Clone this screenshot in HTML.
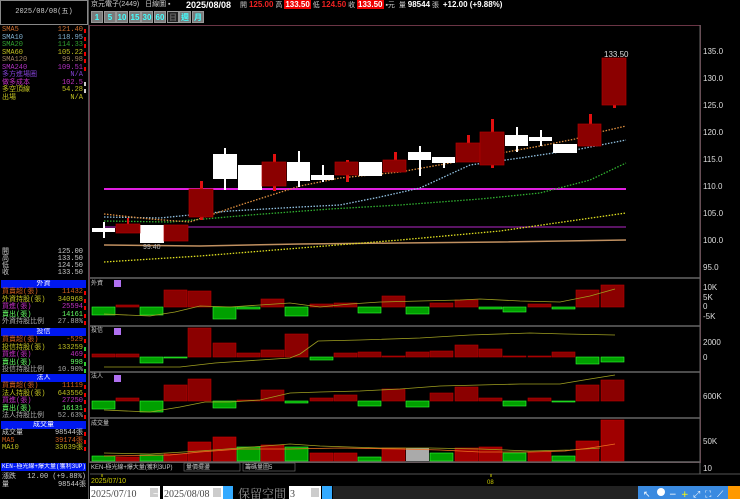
<!DOCTYPE html>
<html><head><meta charset="utf-8"><style>
*{margin:0;padding:0;box-sizing:border-box}
body{width:740px;height:499px;background:#000;overflow:hidden;position:relative;font-family:"Liberation Sans","Noto Sans CJK TC",sans-serif;color:#ccc}
.a{position:absolute;white-space:nowrap}
.t{font-size:7px;line-height:7.3px;font-family:"Liberation Mono","Noto Sans CJK TC",monospace;white-space:nowrap}
.r{position:absolute;left:2px;width:84px;height:7.3px}
.r span{position:absolute;right:3px}
.r i{position:absolute;right:0;top:2px;width:2px;height:4px;background:#e00}
.hd{position:absolute;left:1px;width:85px;height:8px;background:#0018f0;color:#fff;font-size:7px;line-height:8px;text-align:center;font-family:"Liberation Mono","Noto Sans CJK TC",monospace;white-space:nowrap;overflow:hidden}
.btn{position:absolute;top:11px;height:12px;width:12px;background:#7a7a7a;color:#4ff;font-size:8px;line-height:12px;text-align:center;font-weight:bold;border:1px solid #999}
.ax{position:absolute;left:703px;font-size:8px;color:#ddd}
</style></head><body>
<div class="a" style="left:0;top:0;width:88px;height:25px;border:1px solid #888;color:#ccc;font-size:7px;text-align:center;line-height:23px;font-family:'Liberation Mono','Noto Sans CJK TC',monospace">2025/08/08(五)</div>
<div class="a" style="left:88px;top:0;width:1px;height:499px;background:#555"></div>
<div class="t">
<div class="r" style="top:27px;color:#d07030">SMA5<span>121.40</span><i></i></div>
<div class="r" style="top:34.5px;color:#80b0d0">SMA10<span>118.95</span><i></i></div>
<div class="r" style="top:42px;color:#30a030">SMA20<span>114.33</span><i></i></div>
<div class="r" style="top:49.5px;color:#c0c020">SMA60<span>105.22</span><i></i></div>
<div class="r" style="top:57px;color:#a08060">SMA120<span>99.98</span><i></i></div>
<div class="r" style="top:64.5px;color:#b030c0">SMA240<span>109.51</span><i></i></div>
<div class="r" style="top:72px;color:#8040d0">多方進場圈<span>N/A</span></div>
<div class="r" style="top:79.5px;color:#c030c0">做多成本<span>102.5</span><i style="background:#ccc"></i></div>
<div class="r" style="top:87px;color:#c0c020">多空頂線<span>54.28</span><i style="background:#ccc"></i></div>
<div class="r" style="top:94.5px;color:#c0c020">出場<span>N/A</span></div>
<div class="r" style="top:249px">開<span>125.00</span></div>
<div class="r" style="top:256px">高<span>133.50</span></div>
<div class="r" style="top:263px">低<span>124.50</span></div>
<div class="r" style="top:270px">收<span>133.50</span></div>
</div>
<div class="hd" style="top:280px">外資</div>
<div class="t">
<div class="r" style="top:289px;color:#d06020">買賣超(張)<span>11432</span><i></i></div>
<div class="r" style="top:296.5px;color:#c0c020">外資持股(張)<span>340968</span><i></i></div>
<div class="r" style="top:304px;color:#c030c0">買進(張)<span>25594</span><i></i></div>
<div class="r" style="top:311.5px;color:#6f6">賣出(張)<span>14161</span><i></i></div>
<div class="r" style="top:319px;color:#aaa">外資持股比例<span>27.88%</span><i></i></div>
</div>
<div class="hd" style="top:328px">投信</div>
<div class="t">
<div class="r" style="top:337px;color:#d06020">買賣超(張)<span>-529</span><i></i></div>
<div class="r" style="top:344.5px;color:#c0c020">投信持股(張)<span>133259</span><i style="background:#3c3"></i></div>
<div class="r" style="top:352px;color:#c030c0">買進(張)<span>469</span><i></i></div>
<div class="r" style="top:359.5px;color:#6f6">賣出(張)<span>998</span><i style="background:#3c3"></i></div>
<div class="r" style="top:367px;color:#aaa">投信持股比例<span>10.90%</span><i style="background:#3c3"></i></div>
</div>
<div class="hd" style="top:374px">法人</div>
<div class="t">
<div class="r" style="top:383px;color:#d06020">買賣超(張)<span>11119</span><i></i></div>
<div class="r" style="top:390.5px;color:#c0c020">法人持股(張)<span>643556</span><i></i></div>
<div class="r" style="top:398px;color:#c030c0">買進(張)<span>27250</span><i></i></div>
<div class="r" style="top:405.5px;color:#6f6">賣出(張)<span>16131</span><i></i></div>
<div class="r" style="top:413px;color:#aaa">法人持股比例<span>52.63%</span><i></i></div>
</div>
<div class="hd" style="top:421px">成交量</div>
<div class="t">
<div class="r" style="top:430px;color:#ccc">成交量<span>98544張</span><i></i></div>
<div class="r" style="top:437.5px;color:#d06020">MA5<span>39174張</span><i></i></div>
<div class="r" style="top:445px;color:#c0c020">MA10<span>33639張</span><i></i></div>
</div>
<div class="hd" style="top:463px;text-align:left;padding-left:1px;font-size:6px">KEN-極光線+爆大量(獲利3UP)</div>
<div class="t">
<div class="r" style="top:474px">漲跌<span style="right:0">12.00 (+9.88%)</span></div>
<div class="r" style="top:481.5px">量<span style="right:0">98544張</span></div>
</div>
<div class="a" style="left:91px;top:0;font-size:7px;line-height:10px;color:#ccc">京元電子(2449) &nbsp; 日線圖 ▪</div>
<div class="a" style="left:186px;top:0;font-size:9px;line-height:10px;color:#fff;font-weight:bold">2025/08/08</div>
<div class="a" style="left:240px;top:0;font-size:7px;line-height:10px;color:#ccc">開 <b style="color:#e22;font-size:8px">125.00</b> 高 <b style="color:#fff;background:#e00;font-size:8px;padding:0 1px">133.50</b> 低 <b style="color:#e22;font-size:8px">124.50</b> 收 <b style="color:#fff;background:#e00;font-size:8px;padding:0 1px">133.50</b> ▪元 &nbsp;量 <b style="color:#fff;font-size:8px">98544</b> 張 &nbsp;<b style="color:#fff;font-size:8px">+12.00 (+9.88%)</b></div>
<div class="btn" style="left:91px">1</div><div class="btn" style="left:104px">5</div>
<div class="btn" style="left:116px">10</div><div class="btn" style="left:129px">15</div>
<div class="btn" style="left:141px">30</div><div class="btn" style="left:154px">60</div>
<div class="btn" style="left:167px;background:#222;color:#666">日</div>
<div class="btn" style="left:179px">週</div><div class="btn" style="left:192px">月</div>
<div class="ax" style="top:47px">135.0</div><div class="ax" style="top:74px">130.0</div>
<div class="ax" style="top:101px">125.0</div><div class="ax" style="top:128px">120.0</div>
<div class="ax" style="top:155px">115.0</div><div class="ax" style="top:182px">110.0</div>
<div class="ax" style="top:209px">105.0</div><div class="ax" style="top:236px">100.0</div>
<div class="ax" style="top:263px">95.0</div>
<div class="ax" style="top:283px">10K</div><div class="ax" style="top:293px">5K</div>
<div class="ax" style="top:302px">0</div><div class="ax" style="top:312px">-5K</div>
<div class="ax" style="top:338px">2000</div><div class="ax" style="top:353px">0</div>
<div class="ax" style="top:392px">600K</div><div class="ax" style="top:437px">50K</div>
<div class="ax" style="top:464px">10</div>
<svg class="a" style="left:0;top:0" width="740" height="499">
<g fill="none">
<rect x="89.5" y="25.5" width="611" height="437" stroke="#6a3545"/>
<line x1="90" y1="278" x2="700" y2="278" stroke="#666" stroke-width="1.5"/>
<line x1="90" y1="326" x2="700" y2="326" stroke="#666" stroke-width="1.5"/>
<line x1="90" y1="372" x2="700" y2="372" stroke="#666" stroke-width="1.5"/>
<line x1="90" y1="418" x2="700" y2="418" stroke="#666" stroke-width="1.5"/>
<line x1="90" y1="462" x2="700" y2="462" stroke="#666" stroke-width="1.5"/>
<line x1="90" y1="474" x2="740" y2="474" stroke="#555"/>
<line x1="700" y1="25" x2="700" y2="474" stroke="#666"/>
<line x1="104" y1="189" x2="626" y2="189" stroke="#e020e0" stroke-width="2"/>
<line x1="104" y1="227" x2="626" y2="227" stroke="#9020a0" stroke-width="1.2"/>
<polyline points="104,245 200,246 300,244 400,243 500,242 626,240" stroke="#c09060" stroke-width="1.5"/>
<polyline points="104,262 200,256 300,248 400,240 500,231 626,213" stroke="#e0e020" stroke-dasharray="1.5,1.5" stroke-width="1.3"/>
<polyline points="104,221 170,222 250,215 330,209 400,205 480,199 540,193 590,180 626,163" stroke="#30b030" stroke-dasharray="1.5,1.5" stroke-width="1.3"/>
<polyline points="104,217 160,218 230,211 300,207 340,205 380,197 420,188 470,165 520,158 580,149 626,140" stroke="#90c0e0" stroke-dasharray="1.5,1.5" stroke-width="1.3"/>
<polyline points="104,214 150,219 190,222 240,205 300,186 340,178 400,172 450,163 490,155 540,146 575,139 600,132 626,126" stroke="#e09040" stroke-dasharray="1.5,1.5" stroke-width="1.3"/>
</g>
<g fill="#fff">
<rect x="103" y="222" width="2" height="16"/><rect x="92" y="228" width="23" height="4"/>
<rect x="140" y="225" width="24" height="18"/>
<rect x="224" y="148" width="2" height="42"/><rect x="213" y="154" width="24" height="25"/>
<rect x="238" y="165" width="24" height="25"/>
<rect x="298" y="151" width="2" height="36"/><rect x="287" y="162" width="23" height="19"/>
<rect x="322" y="165" width="2" height="17"/><rect x="311" y="175" width="23" height="5"/>
<rect x="359" y="162" width="23" height="14"/>
<rect x="419" y="146" width="2" height="30"/><rect x="408" y="152" width="23" height="8"/>
<rect x="443" y="157" width="2" height="11"/><rect x="432" y="157" width="23" height="6"/>
<rect x="516" y="127" width="2" height="25"/><rect x="505" y="135" width="23" height="11"/>
<rect x="540" y="130" width="2" height="16"/><rect x="529" y="137" width="23" height="4"/>
<rect x="553" y="144" width="24" height="9"/>
</g>
<g fill="#e01010">
<rect x="127" y="218" width="2" height="8"/><rect x="200" y="181" width="3" height="39"/>
<rect x="273" y="154" width="3" height="37"/><rect x="346" y="160" width="3" height="22"/>
<rect x="394" y="152" width="3" height="20"/><rect x="467" y="135" width="3" height="27"/>
<rect x="491" y="119" width="3" height="49"/><rect x="589" y="114" width="3" height="32"/>
<rect x="613" y="58" width="3" height="50"/>
</g>
<g fill="#8b0000" stroke="#b00000" stroke-width="0.7">
<rect x="116" y="224" width="24" height="9"/><rect x="164" y="225" width="24" height="16"/>
<rect x="189" y="189" width="24" height="28"/><rect x="262" y="162" width="24" height="24"/>
<rect x="335" y="162" width="23" height="13"/><rect x="383" y="160" width="23" height="12"/>
<rect x="456" y="143" width="24" height="19"/><rect x="480" y="132" width="24" height="33"/>
<rect x="578" y="124" width="23" height="22"/><rect x="602" y="58" width="24" height="47"/>
</g>
<text x="604" y="57" fill="#ddd" font-size="8" font-family="Liberation Sans">133.50</text>
<text x="143" y="249" fill="#bbb" font-size="7" font-family="Liberation Sans">99.40</text>
<g font-size="6" fill="#ccc" font-family="Liberation Sans,Noto Sans CJK TC,sans-serif">
<text x="91" y="285">外資</text><text x="91" y="332">投信</text><text x="91" y="378">法人</text><text x="91" y="425">成交量</text>
</g>
<g fill="#b070f0"><rect x="114" y="280" width="7" height="7"/><rect x="114" y="328" width="7" height="7"/><rect x="114" y="375" width="7" height="7"/></g>
<g fill="#8b0000" stroke="#b00" stroke-width=".6">
<rect x="116" y="305" width="23" height="2"/><rect x="164" y="290" width="23" height="17"/><rect x="188" y="291" width="23" height="16"/>
<rect x="261" y="299" width="23" height="8"/><rect x="310" y="304" width="23" height="3"/><rect x="334" y="303" width="23" height="4"/>
<rect x="382" y="296" width="23" height="11"/><rect x="430" y="303" width="23" height="4"/><rect x="455" y="300" width="23" height="7"/>
<rect x="528" y="304" width="23" height="3"/><rect x="576" y="290" width="23" height="17"/><rect x="601" y="285" width="23" height="22"/>
</g>
<g fill="#00a000" stroke="#3f3" stroke-width=".6">
<rect x="92" y="307" width="23" height="8"/><rect x="140" y="307" width="23" height="8"/><rect x="213" y="307" width="23" height="12"/>
<rect x="237" y="307" width="23" height="2"/><rect x="285" y="307" width="23" height="9"/><rect x="358" y="307" width="23" height="6"/>
<rect x="406" y="307" width="23" height="7"/><rect x="479" y="307" width="23" height="2"/><rect x="503" y="307" width="23" height="5"/>
<rect x="552" y="307" width="23" height="2"/>
</g>
<polyline fill="none" stroke="#a0a020" points="104,314 150,316 175,312 200,306 230,307 260,305 290,303 320,307 350,304 380,302 420,301 460,300 480,299 520,301 560,302 590,296 615,289" stroke-width=".8"/>
<g fill="#8b0000" stroke="#b00" stroke-width=".6">
<rect x="92" y="354" width="23" height="3"/><rect x="116" y="354" width="23" height="3"/><rect x="188" y="328" width="23" height="29"/>
<rect x="213" y="343" width="23" height="14"/><rect x="237" y="353" width="23" height="4"/><rect x="261" y="350" width="23" height="7"/>
<rect x="285" y="334" width="23" height="23"/><rect x="334" y="353" width="23" height="4"/><rect x="358" y="352" width="23" height="5"/>
<rect x="382" y="356" width="23" height="1"/><rect x="406" y="352" width="23" height="5"/><rect x="430" y="351" width="23" height="6"/>
<rect x="455" y="345" width="23" height="12"/><rect x="479" y="349" width="23" height="8"/><rect x="503" y="356" width="23" height="1"/>
<rect x="528" y="356" width="23" height="1"/><rect x="552" y="352" width="23" height="5"/>
</g>
<g fill="#00a000" stroke="#3f3" stroke-width=".6">
<rect x="140" y="357" width="23" height="6"/><rect x="164" y="357" width="23" height="1"/><rect x="310" y="357" width="23" height="3"/>
<rect x="576" y="357" width="23" height="7"/><rect x="601" y="357" width="23" height="5"/>
</g>
<polyline fill="none" stroke="#a0a020" points="104,367 180,367 215,363 260,360 290,358 300,354 318,341 360,340 420,338 470,335 530,333 565,334 615,335" stroke-width=".8"/>
<g fill="#8b0000" stroke="#b00" stroke-width=".6">
<rect x="116" y="398" width="23" height="3"/><rect x="164" y="385" width="23" height="16"/><rect x="188" y="379" width="23" height="22"/>
<rect x="237" y="400" width="23" height="1"/><rect x="261" y="390" width="23" height="11"/><rect x="310" y="398" width="23" height="3"/>
<rect x="334" y="395" width="23" height="6"/><rect x="382" y="389" width="23" height="12"/><rect x="430" y="393" width="23" height="8"/>
<rect x="455" y="387" width="23" height="14"/><rect x="479" y="398" width="23" height="3"/><rect x="528" y="398" width="23" height="3"/>
<rect x="576" y="385" width="23" height="16"/><rect x="601" y="380" width="23" height="21"/>
</g>
<g fill="#00a000" stroke="#3f3" stroke-width=".6">
<rect x="92" y="401" width="23" height="8"/><rect x="140" y="401" width="23" height="11"/><rect x="213" y="401" width="23" height="7"/>
<rect x="285" y="401" width="23" height="2"/><rect x="358" y="401" width="23" height="5"/><rect x="406" y="401" width="23" height="6"/>
<rect x="503" y="401" width="23" height="5"/><rect x="552" y="401" width="23" height="1"/>
</g>
<polyline fill="none" stroke="#a0a020" points="104,410 150,412 180,407 205,402 230,402 260,400 290,393 320,392 360,391 400,389 440,386 480,385 520,384 560,384 590,379 615,375" stroke-width=".8"/>
<g fill="#a00000" stroke="#c00" stroke-width=".6">
<rect x="116" y="457" width="23" height="4"/><rect x="164" y="454" width="23" height="7"/><rect x="188" y="442" width="23" height="19"/>
<rect x="213" y="437" width="23" height="24"/><rect x="261" y="445" width="23" height="16"/><rect x="310" y="453" width="23" height="8"/>
<rect x="334" y="453" width="23" height="8"/><rect x="382" y="448" width="23" height="13"/><rect x="455" y="448" width="23" height="13"/>
<rect x="479" y="447" width="23" height="14"/><rect x="528" y="452" width="23" height="9"/><rect x="576" y="441" width="23" height="20"/>
<rect x="601" y="420" width="23" height="41"/>
</g>
<g fill="#00a000" stroke="#3f3" stroke-width=".6">
<rect x="92" y="456" width="23" height="5"/><rect x="140" y="455" width="23" height="6"/><rect x="237" y="447" width="23" height="14"/>
<rect x="285" y="447" width="23" height="14"/><rect x="358" y="457" width="23" height="4"/><rect x="430" y="453" width="23" height="8"/>
<rect x="503" y="453" width="23" height="8"/><rect x="552" y="456" width="23" height="5"/>
</g>
<rect x="406" y="448" width="23" height="13" fill="#aaa"/>
<polyline fill="none" stroke="#a0a020" points="104,453 150,454 200,451 240,448 290,444 320,446 380,448 430,448 480,449 530,451 570,450 600,448" stroke-width=".8"/>
<polyline fill="none" stroke="#f07020" points="104,456 170,455 200,452 240,449 290,449 340,448 400,449 440,450 480,452 530,452 565,451 590,448 615,444" stroke-width=".8"/>
<g fill="#000" stroke="#777" stroke-width=".6"><rect x="184" y="463" width="56" height="8"/><rect x="243" y="463" width="52" height="8"/></g>
<g font-size="6" fill="#ccc" font-family="Liberation Sans,Noto Sans CJK TC,sans-serif">
<text x="91" y="469">KEN-極光線+爆大量(獲利3UP)</text><text x="186" y="469">量價擺盪</text><text x="245" y="469">籌碼量圖5</text>
</g>
<line x1="102" y1="474" x2="102" y2="477" stroke="#cc0"/><line x1="491" y1="474" x2="491" y2="477" stroke="#cc0"/>
<text x="91" y="483" font-size="7" fill="#cc0" font-family="Liberation Sans">2025/07/10</text>
<text x="487" y="484" font-size="6" fill="#cc0" font-family="Liberation Sans">08</text>
<rect x="333" y="486" width="307" height="13" fill="#222"/>
<rect x="90" y="486" width="70" height="13" fill="#fff"/><rect x="163" y="486" width="70" height="13" fill="#fff"/>
<rect x="289" y="486" width="32" height="13" fill="#fff"/>
<g fill="#ccc"><rect x="150" y="488" width="8" height="9"/><rect x="213" y="488" width="8" height="9"/><rect x="311" y="488" width="8" height="9"/></g>
<rect x="223" y="486" width="10" height="13" fill="#3af"/><rect x="322" y="486" width="10" height="13" fill="#3af"/>
<g font-family="Liberation Serif,Noto Serif CJK SC,serif" font-size="10" fill="#444">
<text x="91" y="497">2025/07/10</text><text x="164" y="497">2025/08/08</text><text x="290" y="497">3</text></g>
<text x="153" y="497" font-size="10" fill="#fff" font-family="Liberation Sans">~</text>
<text x="238" y="498" font-size="12" fill="#999" font-family="Noto Serif CJK SC,serif">保留空間</text>
<rect x="638" y="486" width="102" height="13" fill="#3a8ae0"/>
<g fill="#fff" font-size="9" font-family="DejaVu Sans"><text x="643" y="497">↖</text><circle cx="661" cy="492" r="4" fill="#fff"/><text x="669" y="497">−</text><text x="681" y="497" fill="#ff0">+</text><text x="693" y="497">⤢</text><text x="705" y="497">⛶</text><text x="717" y="497">⟋</text></g>
<rect x="728" y="486" width="12" height="13" fill="#f90"/>
</svg>
</body></html>
